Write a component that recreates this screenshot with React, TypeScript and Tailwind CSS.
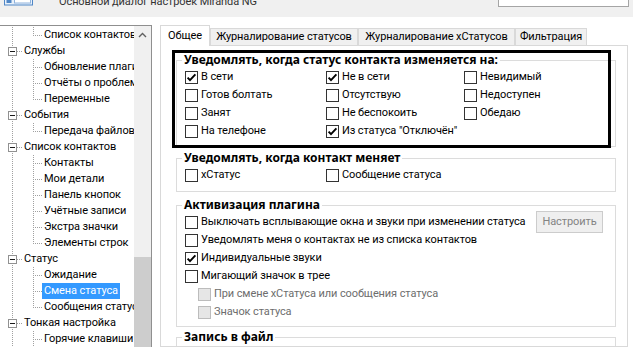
import { FC, ReactNode } from "react";

type TreeNode = { label: string; level: 0 | 1; last?: boolean; selected?: boolean };

const treeItems: TreeNode[] = [
  { label: "Список контактов", level: 1, last: true },
  { label: "Службы", level: 0 },
  { label: "Обновление плагинов", level: 1 },
  { label: "Отчёты о проблемах", level: 1 },
  { label: "Переменные", level: 1, last: true },
  { label: "События", level: 0 },
  { label: "Передача файлов", level: 1, last: true },
  { label: "Список контактов", level: 0 },
  { label: "Контакты", level: 1 },
  { label: "Мои детали", level: 1 },
  { label: "Панель кнопок", level: 1 },
  { label: "Учётные записи", level: 1 },
  { label: "Экстра значки", level: 1 },
  { label: "Элементы строк", level: 1, last: true },
  { label: "Статус", level: 0 },
  { label: "Ожидание", level: 1 },
  { label: "Смена статуса", level: 1, selected: true },
  { label: "Сообщения статуса", level: 1, last: true },
  { label: "Тонкая настройка", level: 0 },
  { label: "Горячие клавиши", level: 1 },
];

const DOT = "#a0a0a0";

const TreeRow: FC<{ node: TreeNode }> = ({ node }) => {
  const w = node.level === 0 ? 22 : 42;
  return (
    <div className="flex items-center h-[16px] whitespace-nowrap">
      <svg width={w} height="16" className="shrink-0" shapeRendering="crispEdges">
        <line x1="12.5" y1="0" x2="12.5" y2="16" stroke={DOT} strokeDasharray="1 1" />
        {node.level === 0 ? (
          <>
            <line x1="17" y1="8.5" x2="22" y2="8.5" stroke={DOT} strokeDasharray="1 1" />
            <rect x="8.5" y="4.5" width="8" height="8" fill="#fff" stroke="#919191" />
            <line x1="10" y1="8.5" x2="15" y2="8.5" stroke="#1a1a1a" />
          </>
        ) : (
          <>
            <line x1="33.5" y1="0" x2="33.5" y2={node.last ? 9 : 16} stroke={DOT} strokeDasharray="1 1" />
            <line x1="35" y1="8.5" x2="42" y2="8.5" stroke={DOT} strokeDasharray="1 1" />
          </>
        )}
      </svg>
      <span
        className={
          node.selected
            ? "bg-[#3399ff] text-white px-[2px] leading-[16px]"
            : "px-[2px] leading-[16px]"
        }
      >
        {node.label}
      </span>
    </div>
  );
};

const Tree: FC = () => (
  <div className="w-[152px] shrink-0 flex border-t border-r border-[#8f8f8f] bg-white">
    <div className="w-[134px] overflow-hidden pt-[1px]">
      {treeItems.map((n, i) => (
        <TreeRow key={i} node={n} />
      ))}
    </div>
    <div className="w-[17px] flex flex-col bg-[#f0f0f0]">
      <div className="h-[17px] flex items-center justify-center">
        <svg width="9" height="6" viewBox="0 0 9 6">
          <path d="M1 5 L4.5 1.5 L8 5" fill="none" stroke="#606060" strokeWidth="1.4" />
        </svg>
      </div>
      <div className="h-[214px]" />
      <div className="flex-1 bg-[#cdcdcd]" />
    </div>
  </div>
);

const Box: FC<{ checked?: boolean; disabled?: boolean }> = ({ checked, disabled }) => (
  <span
    className={
      disabled
        ? "w-[13px] h-[13px] shrink-0 border border-[#bcbcbc] bg-[#e6e6e6]"
        : "w-[13px] h-[13px] shrink-0 border border-[#333333] bg-white flex items-center justify-center"
    }
  >
    {checked && (
      <svg width="11" height="11" viewBox="0 0 11 11">
        <path d="M1.6 5.6 L4 8.2 L9.4 2.4" fill="none" stroke="#000" strokeWidth="1.9" />
      </svg>
    )}
  </span>
);

const Check: FC<{ label?: string; checked?: boolean; disabled?: boolean }> = ({
  label,
  checked,
  disabled,
}) =>
  label ? (
    <div className="flex items-center gap-[3px] h-[18px] whitespace-nowrap">
      <Box checked={checked} disabled={disabled} />
      <span className={disabled ? "text-[#6d6d6d] leading-[16px]" : "leading-[16px]"}>{label}</span>
    </div>
  ) : (
    <div />
  );

const Legend: FC<{ children: ReactNode }> = ({ children }) => (
  <legend className="ml-[5px] px-[2px] font-bold leading-[16px] text-[12px] tracking-normal font-['Noto_Sans',sans-serif]">
    {children}
  </legend>
);

const tabs = [
  { label: "Общее", cls: "w-[50px] h-[21px] bg-white border border-b-0 border-[#d9d9d9] relative z-10" },
  { label: "Журналирование статусов", cls: "w-[148px] h-[18px] bg-[#f0f0f0] border border-[#d9d9d9]" },
  { label: "Журналирование хСтатусов", cls: "w-[157px] h-[18px] bg-[#f0f0f0] border border-[#d9d9d9]" },
  { label: "Фильтрация", cls: "w-[72px] h-[18px] bg-[#f0f0f0] border border-[#d9d9d9]" },
];

const Options: FC = () => (
  <div className="ml-[8px] w-[468px] flex flex-col">
    <div className="flex items-end h-[21px]">
      {tabs.map((t) => (
        <div key={t.label} className={t.cls + " flex items-center justify-center whitespace-nowrap"}>
          {t.label}
        </div>
      ))}
    </div>
    <div className="-mt-px flex-1 border border-[#d9d9d9] bg-white overflow-hidden">
      <div className="relative ml-[15px] w-[440px] mt-[6px]">
        <fieldset className="border border-[#dcdcdc]">
          <Legend>Уведомлять, когда статус контакта изменяется на:</Legend>
          <div className="grid grid-cols-[141px_138px_1fr] pl-[8px] pb-[6px]">
            <Check label="В сети" checked />
            <Check label="Не в сети" checked />
            <Check label="Невидимый" />
            <Check label="Готов болтать" />
            <Check label="Отсутствую" />
            <Check label="Недоступен" />
            <Check label="Занят" />
            <Check label="Не беспокоить" />
            <Check label="Обедаю" />
            <Check label="На телефоне" />
            <Check label={'Из статуса "Отключён"'} checked />
            <Check />
          </div>
        </fieldset>
        <div className="absolute -left-[4px] -top-[2px] w-[439px] h-[98px] border-[3px] border-black pointer-events-none" />
      </div>

      <fieldset className="ml-[15px] w-[440px] mt-[3px] border border-[#dcdcdc]">
        <Legend>Уведомлять, когда контакт меняет</Legend>
        <div className="grid grid-cols-[141px_1fr] pl-[8px] pb-[7px]">
          <Check label="хСтатус" />
          <Check label="Сообщение статуса" />
        </div>
      </fieldset>

      <fieldset className="ml-[15px] w-[440px] mt-[5px] border border-[#dcdcdc]">
        <Legend>Активизация плагина</Legend>
        <div className="flex flex-col pl-[8px] pb-[5px]">
          <div className="flex items-center justify-between pr-[12px]">
            <Check label="Выключать всплывающие окна и звуки при изменении статуса" />
            <button
              disabled
              className="w-[67px] h-[22px] -my-[2px] border border-[#cccccc] bg-[#efefef] text-[#838383]"
            >
              Настроить
            </button>
          </div>
          <Check label="Уведомлять меня о контактах не из списка контактов" />
          <Check label="Индивидуальные звуки" checked />
          <Check label="Мигающий значок в трее" />
          <div className="pl-[13px]">
            <Check label="При смене хСтатуса или сообщения статуса" disabled />
            <Check label="Значок статуса" disabled />
          </div>
        </div>
      </fieldset>

      <fieldset className="ml-[15px] w-[440px] mt-[2px] h-[60px] border border-[#dcdcdc]">
        <Legend>Запись в файл</Legend>
      </fieldset>
    </div>
  </div>
);

const Header: FC = () => (
  <div className="h-[17px] shrink-0 bg-[#f0f0f0] flex items-start overflow-hidden">
    <svg width="30" height="6" className="ml-[4px] shrink-0" viewBox="0 0 30 6">
      <rect x="0.5" y="-6" width="28" height="11" fill="#e8f1fb" stroke="#4f86c6" />
      <rect x="2.5" y="-6" width="5" height="9" fill="#4f86c6" />
      <rect x="10.5" y="-6" width="16" height="9" fill="#ffffff" stroke="#8fb2dc" />
    </svg>
    <span className="ml-[25px] -mt-[6px] leading-[16px] text-[#333333] whitespace-nowrap">
      Основной диалог настроек Miranda NG
    </span>
    <div className="ml-auto mr-[4px] w-[131px] h-[7px] bg-white border border-t-0 border-[#a5a5a5]" />
  </div>
);

export default function App() {
  return (
    <div className="w-[633px] h-[347px] overflow-hidden bg-white flex flex-col text-[11px] tracking-[-0.1px] text-black font-['Roboto',sans-serif]">
      <Header />
      <div className="flex flex-1 min-h-0 pt-[8px]">
        <Tree />
        <Options />
      </div>
    </div>
  );
}
